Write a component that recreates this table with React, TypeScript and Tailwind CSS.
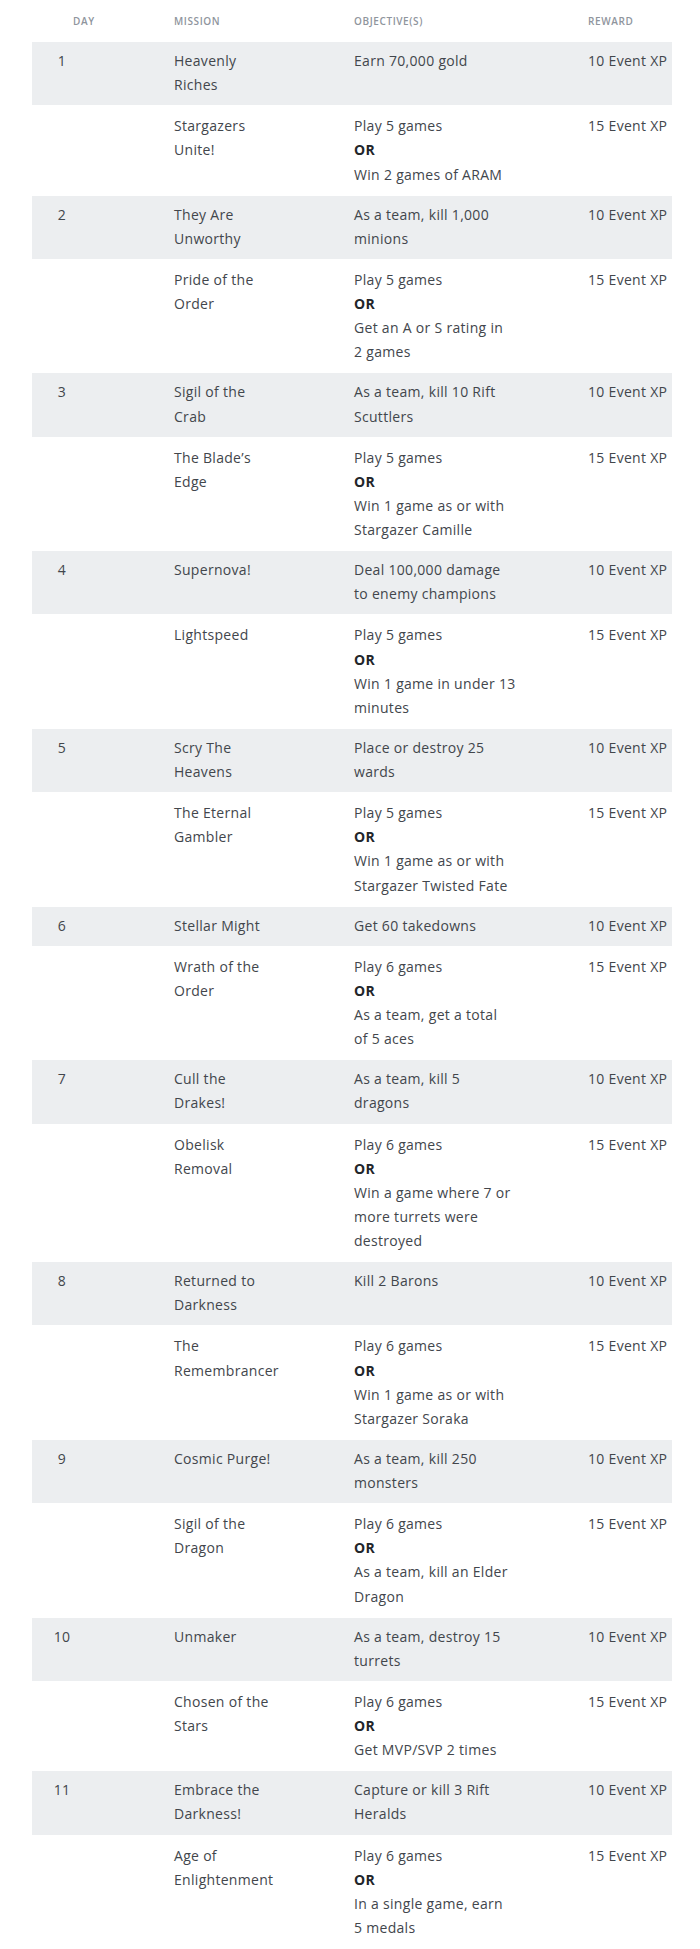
import React from "react";

type Mission = {
  day?: string;
  mission: string[];
  objective: string[];
  reward: string;
};

const missions: Mission[] = [
  { day: "1", mission: ["Heavenly", "Riches"], objective: ["Earn 70,000 gold"], reward: "10 Event XP" },
  { mission: ["Stargazers", "Unite!"], objective: ["Play 5 games", "OR", "Win 2 games of ARAM"], reward: "15 Event XP" },
  { day: "2", mission: ["They Are", "Unworthy"], objective: ["As a team, kill 1,000", "minions"], reward: "10 Event XP" },
  { mission: ["Pride of the", "Order"], objective: ["Play 5 games", "OR", "Get an A or S rating in", "2 games"], reward: "15 Event XP" },
  { day: "3", mission: ["Sigil of the", "Crab"], objective: ["As a team, kill 10 Rift", "Scuttlers"], reward: "10 Event XP" },
  { mission: ["The Blade’s", "Edge"], objective: ["Play 5 games", "OR", "Win 1 game as or with", "Stargazer Camille"], reward: "15 Event XP" },
  { day: "4", mission: ["Supernova!"], objective: ["Deal 100,000 damage", "to enemy champions"], reward: "10 Event XP" },
  { mission: ["Lightspeed"], objective: ["Play 5 games", "OR", "Win 1 game in under 13", "minutes"], reward: "15 Event XP" },
  { day: "5", mission: ["Scry The", "Heavens"], objective: ["Place or destroy 25", "wards"], reward: "10 Event XP" },
  { mission: ["The Eternal", "Gambler"], objective: ["Play 5 games", "OR", "Win 1 game as or with", "Stargazer Twisted Fate"], reward: "15 Event XP" },
  { day: "6", mission: ["Stellar Might"], objective: ["Get 60 takedowns"], reward: "10 Event XP" },
  { mission: ["Wrath of the", "Order"], objective: ["Play 6 games", "OR", "As a team, get a total", "of 5 aces"], reward: "15 Event XP" },
  { day: "7", mission: ["Cull the", "Drakes!"], objective: ["As a team, kill 5", "dragons"], reward: "10 Event XP" },
  { mission: ["Obelisk", "Removal"], objective: ["Play 6 games", "OR", "Win a game where 7 or", "more turrets were", "destroyed"], reward: "15 Event XP" },
  { day: "8", mission: ["Returned to", "Darkness"], objective: ["Kill 2 Barons"], reward: "10 Event XP" },
  { mission: ["The", "Remembrancer"], objective: ["Play 6 games", "OR", "Win 1 game as or with", "Stargazer Soraka"], reward: "15 Event XP" },
  { day: "9", mission: ["Cosmic Purge!"], objective: ["As a team, kill 250", "monsters"], reward: "10 Event XP" },
  { mission: ["Sigil of the", "Dragon"], objective: ["Play 6 games", "OR", "As a team, kill an Elder", "Dragon"], reward: "15 Event XP" },
  { day: "10", mission: ["Unmaker"], objective: ["As a team, destroy 15", "turrets"], reward: "10 Event XP" },
  { mission: ["Chosen of the", "Stars"], objective: ["Play 6 games", "OR", "Get MVP/SVP 2 times"], reward: "15 Event XP" },
  { day: "11", mission: ["Embrace the", "Darkness!"], objective: ["Capture or kill 3 Rift", "Heralds"], reward: "10 Event XP" },
  { mission: ["Age of", "Enlightenment"], objective: ["Play 6 games", "OR", "In a single game, earn", "5 medals"], reward: "15 Event XP" },
];

const cols = "grid grid-cols-[142px_180px_234px_1fr]";

const MissionRow = ({ row }: { row: Mission }) => {
  const shaded = row.day !== undefined;
  return (
    <div
      className={`${cols} ${
        shaded ? "bg-[#eceef0] pt-[7px] pb-[8px]" : "bg-white pt-[9px] pb-[9px]"
      }`}
    >
      <div className="w-[60px] text-center">{row.day}</div>
      <div>
        {row.mission.map((line) => (
          <div key={line} className="whitespace-nowrap">
            {line}
          </div>
        ))}
      </div>
      <div>
        {row.objective.map((line, i) =>
          line === "OR" ? (
            <div key={i} className="font-bold text-[#22252a]">
              OR
            </div>
          ) : (
            <div key={i} className="whitespace-nowrap">
              {line}
            </div>
          )
        )}
      </div>
      <div className="whitespace-nowrap">{row.reward}</div>
    </div>
  );
};

export default function App() {
  return (
    <div className="bg-white w-[700px] min-h-[1949px] font-['Open_Sans',sans-serif] text-[14px] leading-[24.125px] tracking-[0.3px] text-[#42464c]">
      <div className="ml-8 w-[640px]">
        <div className={`${cols} h-[42px] items-center text-[10px] font-semibold uppercase tracking-[0.6px] text-[#8f959d]`}>
          <div className="pl-[41px]">Day</div>
          <div>Mission</div>
          <div>Objective(s)</div>
          <div>Reward</div>
        </div>
        {missions.map((row, i) => (
          <MissionRow key={i} row={row} />
        ))}
      </div>
    </div>
  );
}
